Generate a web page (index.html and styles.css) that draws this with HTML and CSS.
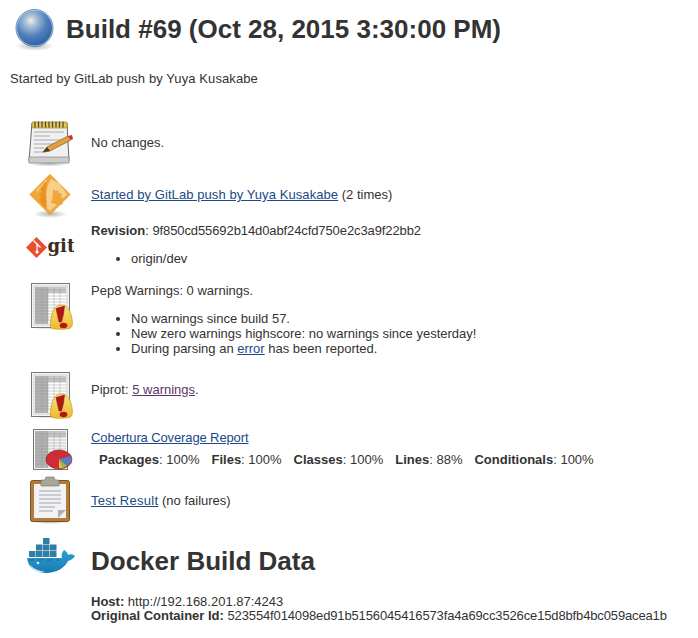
FILE: index.html
```html
<!DOCTYPE html>
<html lang="en">
<head>
  <meta charset="UTF-8" />
  <title>Build #69</title>
  <link rel="stylesheet" href="styles.css">
</head>
<body>

  <svg width="0" height="0" class="defs">
    <defs>
      <radialGradient id="ball" cx="0.4" cy="0.3" r="0.72">
        <stop offset="0" stop-color="#eef0dc"/>
        <stop offset="0.22" stop-color="#a9c0d8"/>
        <stop offset="0.6" stop-color="#4f80bc"/>
        <stop offset="1" stop-color="#2f60a4"/>
      </radialGradient>
      <radialGradient id="shade" cx="0.5" cy="0.5" r="0.5">
        <stop offset="0" stop-color="#777" stop-opacity="0.55"/>
        <stop offset="1" stop-color="#777" stop-opacity="0"/>
      </radialGradient>
      <linearGradient id="yellow" x1="0" y1="0" x2="0" y2="1">
        <stop offset="0" stop-color="#f8e27c"/>
        <stop offset="1" stop-color="#eeb92c"/>
      </linearGradient>
      <linearGradient id="whale" x1="0" y1="0" x2="0" y2="1">
        <stop offset="0" stop-color="#2b9ed4"/>
        <stop offset="1" stop-color="#1a7cb0"/>
      </linearGradient>
      <symbol id="sheet" viewBox="0 0 48 48">
        <ellipse cx="24" cy="44" rx="20" ry="2.500" fill="url(#shade)"/>
        <rect x="5.500" y="0.500" width="38" height="44" fill="#f4f4f4" stroke="#777"/>
        <rect x="8" y="3" width="33" height="39" fill="#fff" stroke="#ccc"/>
        <rect x="9" y="4" width="13" height="37" fill="#b4b4b4"/>
        <rect x="22" y="4" width="18" height="6" fill="#c8c8c8"/>
        <path d="M9 7h31M9 10h31M9 13h31M9 16h31M9 19h31M9 22h31M9 25h31M9 28h31M9 31h31M9 34h31M9 37h31" stroke="#8c8c8c" stroke-width="0.600" opacity="0.700"/>
        <path d="M16 4v37M22 4v37M28 4v37M34 4v37" stroke="#999" stroke-width="0.600" opacity="0.700"/>
      </symbol>
      <symbol id="alert" viewBox="0 0 48 48">
        <use href="#sheet" width="48" height="48"/>
        <path d="M35 22c7 0 10 7 11 14 1 6 0 9-3 9.500-5 1-13 1-17 0-2-1-2-5-1-10 1-7 4-13.500 10-13.500z" fill="url(#yellow)" stroke="#c8961e" stroke-width="0.700"/>
        <path d="M30 25.500l8.500-2.500-1 8-2 8h-2.500z" fill="#b01818" stroke="#7c1010" stroke-width="0.500"/>
        <ellipse cx="37.500" cy="42.500" rx="3.800" ry="2.800" fill="#b01818"/>
      </symbol>
    </defs>
  </svg>

  <h1 class="title">
    <svg class="ball" width="48" height="48" viewBox="0 0 48 48">
      <ellipse cx="24.500" cy="41" rx="19" ry="5" fill="url(#shade)"/>
      <circle cx="24.500" cy="23" r="18" fill="url(#ball)" stroke="#dfe8f2" stroke-width="0.800"/>
      <circle cx="24.500" cy="23" r="18.500" fill="none" stroke="#3f6fa8" stroke-width="0.800"/>
    </svg>
    <span>Build #69 (Oct 28, 2015 3:30:00 PM)</span>
  </h1>

  <p class="cause">Started by GitLab push by Yuya Kusakabe</p>

  <div class="rows">
    <div class="row row-notes">
      <svg class="icon" width="48" height="48" viewBox="0 0 48 48">
        <ellipse cx="23" cy="45" rx="20" ry="2.500" fill="url(#shade)"/>
        <path d="M6 4h35l2 38H3z" fill="#f0f0f0" stroke="#666"/>
        <rect x="3" y="38" width="40" height="6" fill="#ccc" stroke="#777" stroke-width="0.600"/>
        <rect x="6" y="3" width="35" height="6" rx="1" fill="#e8c850" stroke="#8a7220" stroke-width="0.600"/>
        <path d="M9 2.500v6M12.500 2.500v6M16 2.500v6M19.500 2.500v6M23 2.500v6M26.500 2.500v6M30 2.500v6M33.500 2.500v6M37 2.500v6" stroke="#444" stroke-width="1.200"/>
        <path d="M8 13h30M8 17h16M8 21h30M8 25h22M8 29h10M8 33h12" stroke="#aaa" stroke-width="1"/>
        <path d="M17 33l4-5 21-11 3 4-21 11z" fill="#e0a040" stroke="#8a5c18" stroke-width="0.700"/>
        <path d="M17 33l4-5 3 4z" fill="#4a3a20"/>
        <path d="M42 17l3 4 2-1-1-4z" fill="#d83030"/>
      </svg>
      <div class="text">No changes.</div>
    </div>

    <div class="row row-user">
      <svg class="icon" width="48" height="48" viewBox="0 0 48 48">
        <ellipse cx="24" cy="43" rx="17" ry="4" fill="url(#shade)"/>
        <path d="M24 3.500l20 20-20 20-20-20z" fill="#f2a73a" stroke="#e8961f"/>
        <path d="M25 8c3 2 6 3 8 4l8 11.500L24 40l-3-3c-4-6-2-9-1-13 1-5 1-10 5-16z" fill="#f8cf8a"/>
        <path d="M24 7c-5 6-5 11-4 16 1 5 0 9 1 14l-4-2-4-6 2-3-2-3 3-2-1-4 3-2-1-3 3-1z" fill="#e8921f"/>
        <path d="M21 10c-5 3-8 7-9 11l-2-1.500L21 8z" fill="#f8cf8a"/>
        <path d="M27 18l2 2 3-1 1 3 3 1-1 3 3 2-2 2 1 3-3 1-9-2c2-5 2-10 2-14z" fill="#eda53c"/>
      </svg>
      <div class="text"><a href="#" class="wide">Started by GitLab push by Yuya Kusakabe</a> (2 times)</div>
    </div>

    <div class="row row-git">
      <svg class="icon" width="48" height="48" viewBox="0 0 48 48">
        <path d="M10.500 14L0 24.500l10.500 10.500L21 24.500z" fill="#e84e31"/>
        <path d="M7.500 17.500l3.500 3.500v8M11 21l3.500 3.500" stroke="#fff" stroke-width="1.300" fill="none"/>
        <circle cx="11" cy="29" r="1.600" fill="#fff"/>
        <text x="21.500" y="29" class="git">git</text>
      </svg>
      <div class="text">
        <div><b>Revision</b>: <span class="hash">9f850cd55692b14d0abf24cfd750e2c3a9f22bb2</span></div>
        <ul class="list">
          <li>origin/dev</li>
        </ul>
      </div>
    </div>

    <div class="row row-pep">
      <svg class="icon" width="48" height="48"><use href="#alert" width="48" height="48"/></svg>
      <div class="text">
        <div>Pep8 Warnings: 0 warnings.</div>
        <ul class="list">
          <li>No warnings since build 57.</li>
          <li>New zero warnings highscore: no warnings since yesterday!</li>
          <li>During parsing an <a href="#">error</a> has been reported.</li>
        </ul>
      </div>
    </div>

    <div class="row row-piprot">
      <svg class="icon" width="48" height="48"><use href="#alert" width="48" height="48"/></svg>
      <div class="text">Piprot: <a href="#" class="visited">5 warnings</a>.</div>
    </div>

    <div class="row row-cov">
      <svg class="icon" width="48" height="48" viewBox="0 0 48 48">
        <rect x="7.500" y="1.500" width="34" height="40" fill="#f4f4f4" stroke="#777"/>
        <rect x="9" y="3" width="13" height="37" fill="#b4b4b4"/>
        <rect x="22" y="3" width="18" height="6" fill="#c8c8c8"/>
        <path d="M9 6h31M9 9h31M9 12h31M9 15h31M9 18h31M9 21h31M9 24h31M9 27h31M9 30h31M9 33h31M9 36h31" stroke="#8c8c8c" stroke-width="0.600" opacity="0.700"/>
        <path d="M16 3v37M22 3v37M28 3v37M34 3v37" stroke="#999" stroke-width="0.600" opacity="0.700"/>
        <ellipse cx="33" cy="31.500" rx="13" ry="9.500" fill="#d02c38" stroke="#8c1a22" stroke-width="0.600"/>
        <path d="M33 31l12-3c2 4 0 8-4 10z" fill="#5a7cc0"/>
        <path d="M33 31l8 7-4 2z" fill="#8ac048"/>
        <path d="M33 31l4 9-4 0z" fill="#e8c040"/>
      </svg>
      <div class="text">
        <div><a href="#" class="narrow">Cobertura Coverage Report</a></div>
        <div class="cov-stats">
          <span><b>Packages</b>: 100%</span>
          <span><b>Files</b>: 100%</span>
          <span><b>Classes</b>: 100%</span>
          <span><b>Lines</b>: 88%</span>
          <span><b>Conditionals</b>: 100%</span>
        </div>
      </div>
    </div>

    <div class="row row-test">
      <svg class="icon" width="48" height="48" viewBox="0 0 48 48">
        <ellipse cx="24" cy="46" rx="20" ry="2" fill="url(#shade)"/>
        <rect x="4.500" y="4.500" width="39" height="41" rx="2" fill="#b07c3c" stroke="#7a5420"/>
        <rect x="8" y="8" width="32" height="34" fill="#f2f2f2"/>
        <path d="M13 15h22M13 19h22M13 23h22M13 27h22M13 31h16M13 35h14" stroke="#b8c0c8" stroke-width="1.400"/>
        <path d="M32 42v-8h8z" fill="#b0b0b0"/>
        <path d="M15 4h4l1-3h8l1 3h4v6H15z" fill="#a8a898" stroke="#6c6c60" stroke-width="0.600"/>
      </svg>
      <div class="text"><a href="#" class="test-link">Test Result</a> (no failures)</div>
    </div>

    <div class="row row-docker">
      <svg class="icon" width="50" height="48" viewBox="0 0 50 48">
        <path d="M1 20h35c-1-3 0-6 2-8 2 1 4 3 4 5 2-1 5-1 7 1-2 3-4 4-7 5-3 7-12 12-22 12C9 35 2 29 1 20z" fill="url(#whale)"/>
        <path d="M4 27c4 4 9 6 15 7-6 2-12-1-15-7z" fill="#d8eef8"/>
        <circle cx="12" cy="25" r="1.300" fill="#d8eef8"/>
        <path d="M3 22h30" stroke="#14658f" stroke-width="0.800" stroke-dasharray="5 4"/>
        <g fill="#2f7ea8">
          <rect x="3" y="13" width="6.500" height="6"/>
          <rect x="10" y="13" width="6.500" height="6"/>
          <rect x="17" y="13" width="6.500" height="6"/>
          <rect x="24" y="13" width="6.500" height="6"/>
          <rect x="10" y="6.500" width="6.500" height="6"/>
          <rect x="17" y="6.500" width="6.500" height="6"/>
          <rect x="24" y="6.500" width="6.500" height="6"/>
          <rect x="17" y="0" width="6.500" height="6"/>
        </g>
      </svg>
      <h1 class="docker-title">Docker Build Data</h1>
    </div>

    <div class="docker-info">
      <div><b>Host:</b> http://192.168.201.87:4243</div>
      <div><b>Original Container Id:</b> <span class="long-id">523554f014098ed91b5156045416573fa4a69cc3526ce15d8bfb4bc059acea1b</span></div>
    </div>
  </div>

</body>
</html>
```

FILE: styles.css
```css
html, body {
  height: 100%;
}

body {
  font-family: "Liberation Sans", Arial, sans-serif;
  font-size: 13px;
  color: #333;
  background-color: #fff;
  margin: 0;
  padding: 0 10px;
  overflow: hidden;
}

a {
  color: #204a87;
}

a.visited {
  color: #5c3566;
}

a.wide {
  letter-spacing: 0.08px;
}

a.narrow {
  letter-spacing: -0.12px;
}

a.test-link {
  letter-spacing: 0.28px;
}

.hash {
  letter-spacing: -0.1px;
}

.long-id {
  letter-spacing: -0.14px;
}

.defs {
  position: absolute;
}

.title {
  display: flex;
  align-items: center;
  gap: 8px;
  margin: 0;
  padding: 5px 0 0 0;
  height: 48px;
  font-size: 26px;
  font-weight: bold;
}

.ball {
  flex: none;
}

.cause {
  margin: 18px 0 0 0;
  line-height: 16px;
  letter-spacing: 0.1px;
}

.rows {
  margin: 30px 0 0 16px;
}

.row {
  display: flex;
  gap: 17px;
  align-items: flex-start;
}

.icon {
  flex: none;
}

.text {
  line-height: 15px;
}

.list {
  margin: 13px 0 0 0;
  padding: 0 0 0 40px;
}

.row-notes { height: 51px; align-items: center; }
.row-user { height: 53px; padding-bottom: 2px; align-items: center; }
.row-git { height: 60px; }
.row-pep { height: 89px; }
.row-piprot { height: 56px; }
.row-piprot .text { padding-top: 10px; }
.row-cov { height: 48px; }
.row-cov .text { padding-top: 2px; }
.row-test { height: 48px; align-items: center; }
.row-docker { height: 71px; gap: 15px; }
.row-docker .icon { margin-top: 14px; }

.cov-stats {
  display: flex;
  gap: 12px;
  margin: 7px 0 0 8px;
}

.git {
  font-family: "DejaVu Serif", serif;
  font-weight: bold;
  font-size: 18px;
  fill: #3d2d1c;
}

.docker-title {
  margin: 22px 0 0 0;
  font-size: 26px;
  line-height: 30px;
}

.docker-info {
  margin-left: 65px;
  line-height: 14px;
  white-space: nowrap;
}
```
